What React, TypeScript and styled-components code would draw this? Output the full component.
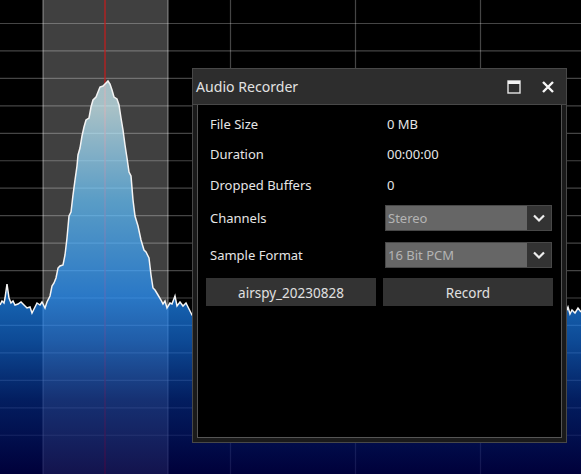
import React from 'react';
import styled, { createGlobalStyle } from 'styled-components';

const GlobalStyle = createGlobalStyle`
  html, body {
    margin: 0;
    padding: 0;
    background: #000;
  }
`;

const Stage = styled.div`
  position: relative;
  width: 581px;
  height: 474px;
  overflow: hidden;
  background: #000;
  font-family: 'Noto Sans', 'Open Sans', sans-serif;
`;

const SpectrumSvg = styled.svg`
  display: block;
`;

const Window = styled.section`
  position: absolute;
  left: 192px;
  top: 68px;
  width: 375px;
  height: 375px;
  box-sizing: border-box;
  display: flex;
  flex-direction: column;
  border: 1px solid #484848;
  background: #1a1a1a;
`;

const TitleBar = styled.header`
  flex: 0 0 35px;
  display: flex;
  align-items: center;
  padding: 0 6px 0 3px;
  background: #2d2d2d;
  border-bottom: 1px solid #484848;
`;

const Title = styled.h1`
  flex: 1;
  margin: 0;
  font-size: 14.1px;
  font-weight: 400;
  color: #e2e2e2;
`;

const TitleButton = styled.button`
  width: 24px;
  height: 24px;
  margin-left: 10px;
  padding: 0;
  display: flex;
  align-items: center;
  justify-content: center;
  border: 0;
  background: transparent;
`;

const Body = styled.div`
  flex: 1;
  margin: 0 4px 4px;
  padding: 4px 8px 0 12px;
  background: #000;
  border: 1px solid #555;
  border-top: 0;
`;

const Row = styled.div<{ $height: number }>`
  display: grid;
  grid-template-columns: 175px 167px;
  align-items: center;
  height: ${(p) => p.$height}px;
  font-size: 13px;
  color: #e6e6e6;
`;

const Value = styled.span`
  padding-left: 2px;
`;

const Select = styled.div`
  height: 26px;
  box-sizing: border-box;
  display: flex;
  border: 1px solid #484848;
  background: #666;
`;

const SelectText = styled.span`
  flex: 1;
  padding-left: 2px;
  line-height: 24px;
  color: #b4b4b4;
`;

const SelectArrow = styled.span`
  flex: 0 0 24px;
  display: flex;
  align-items: center;
  justify-content: center;
  background: #333;
`;

const ButtonRow = styled.div`
  display: grid;
  grid-template-columns: 170px 170px;
  column-gap: 7px;
  margin: 4px 0 0 -4px;
`;

const ActionButton = styled.button`
  height: 28px;
  padding: 1px 0 0;
  border: 0;
  background: #333;
  color: #e0e0e0;
  font: inherit;
  font-size: 13.5px;
`;

const WIDTH = 581;
const HEIGHT = 474;
const H_LINES = Array.from({ length: 16 }, (_, i) => 23.5 + i * 27.45);
const V_LINES = [230.5, 355.5, 480.5];

// Trace outline read off the picture, the part behind the window is just noise.
const TRACE: [number, number][] = [
  [0, 305], [2, 301], [4, 303], [5, 298], [7, 284], [9, 298], [11, 303], [13, 301], [15, 305], [18, 304], [21, 302], [24, 305],
  [27, 308], [30, 307], [32, 313], [34, 309], [37, 303], [40, 305], [42, 302], [45, 308], [47, 302], [50, 296], [52, 286], [54, 283],
  [56, 278], [58, 268], [60, 266], [63, 265], [65, 255], [67, 238], [69, 216], [71, 212], [73, 195], [75, 180], [77, 166], [78, 155],
  [80, 148], [82, 136], [84, 127], [86, 120], [89, 118], [91, 107], [93, 100], [96, 97], [98, 92], [100, 87], [103, 86], [105, 84],
  [108, 81], [110, 84], [112, 90], [114, 97], [117, 99], [119, 105], [121, 118], [123, 130], [125, 145], [127, 158], [129, 172], [131, 176],
  [133, 200], [135, 216], [138, 226], [141, 240], [144, 250], [146, 252], [149, 258], [151, 275], [153, 288], [155, 290], [158, 295], [161, 300],
  [163, 304], [165, 301], [167, 308], [170, 303], [172, 304], [175, 296], [177, 306], [180, 302], [183, 306], [186, 303], [189, 309], [192, 315],
  [300, 310], [566, 312], [568, 307], [570, 314], [572, 310], [575, 313], [578, 308], [581, 312],
];

const tracePath = TRACE.map(([x, y], i) => `${i ? 'L' : 'M'}${x} ${y}`).join(' ');

// The fill is translucent, so grid, band and tuning line show through it faintly.
const Spectrum = () => (
  <SpectrumSvg width={WIDTH} height={HEIGHT} viewBox={`0 0 ${WIDTH} ${HEIGHT}`}>
    <defs>
      <linearGradient id="fill" gradientUnits="userSpaceOnUse" x1="0" y1="80" x2="0" y2="474">
        <stop offset="0.076" stopColor="#d1f6ff" />
        <stop offset="0.305" stopColor="#65c4ff" />
        <stop offset="0.548" stopColor="#2190ff" />
        <stop offset="0.66" stopColor="#136ad6" />
        <stop offset="0.81" stopColor="#042b89" />
        <stop offset="1" stopColor="#000053" />
      </linearGradient>
    </defs>
    <rect x="43" y="0" width="125" height={HEIGHT} fill="#404040" />
    {H_LINES.map((y) => (
      <line key={y} x1="0" x2={WIDTH} y1={y} y2={y} stroke="#fff" strokeOpacity="0.27" strokeWidth="1.2" />
    ))}
    {V_LINES.map((x) => (
      <line key={x} x1={x} x2={x} y1="0" y2={HEIGHT} stroke="#fff" strokeOpacity="0.27" strokeWidth="1.2" />
    ))}
    <line x1="43" x2="43" y1="0" y2={HEIGHT} stroke="#fff" strokeOpacity="0.4" strokeWidth="1.2" />
    <line x1="168" x2="168" y1="0" y2={HEIGHT} stroke="#fff" strokeOpacity="0.4" strokeWidth="1.2" />
    <line x1="105" x2="105" y1="0" y2={HEIGHT} stroke="#c81c1c" strokeWidth="1.2" />
    <path d={`${tracePath} L${WIDTH} ${HEIGHT} L0 ${HEIGHT} Z`} fill="url(#fill)" fillOpacity="0.7" />
    <path d={tracePath} fill="none" stroke="#f4f4f4" strokeWidth="1.5" />
  </SpectrumSvg>
);

const MaximizeIcon = () => (
  <svg width="14" height="14" viewBox="0 0 14 14">
    <rect x="1" y="1" width="12" height="12" fill="none" stroke="#e4e4e4" strokeWidth="1.4" />
    <rect x="1" y="1" width="12" height="3" fill="#f2f2f2" />
  </svg>
);

const CloseIcon = () => (
  <svg width="14" height="14" viewBox="0 0 14 14">
    <path d="M2 2 L12 12 M12 2 L2 12" fill="none" stroke="#f6f6f6" strokeWidth="2.4" />
  </svg>
);

const ChevronIcon = () => (
  <svg width="14" height="10" viewBox="0 0 14 10">
    <path d="M2 2.5 L7 7.5 L12 2.5" fill="none" stroke="#eee" strokeWidth="2.2" />
  </svg>
);

const App = () => (
  <Stage>
    <GlobalStyle />
    <Spectrum />
    <Window>
      <TitleBar>
        <Title>Audio Recorder</Title>
        <TitleButton aria-label="Maximize">
          <MaximizeIcon />
        </TitleButton>
        <TitleButton aria-label="Close">
          <CloseIcon />
        </TitleButton>
      </TitleBar>
      <Body>
        <Row $height={30}>
          File Size<Value>0 MB</Value>
        </Row>
        <Row $height={30}>
          Duration<Value>00:00:00</Value>
        </Row>
        <Row $height={31}>
          Dropped Buffers<Value>0</Value>
        </Row>
        <Row $height={36}>
          Channels
          <Select>
            <SelectText>Stereo</SelectText>
            <SelectArrow>
              <ChevronIcon />
            </SelectArrow>
          </Select>
        </Row>
        <Row $height={38}>
          Sample Format
          <Select>
            <SelectText>16 Bit PCM</SelectText>
            <SelectArrow>
              <ChevronIcon />
            </SelectArrow>
          </Select>
        </Row>
        <ButtonRow>
          <ActionButton>airspy_20230828</ActionButton>
          <ActionButton>Record</ActionButton>
        </ButtonRow>
      </Body>
    </Window>
  </Stage>
);

export default App;
